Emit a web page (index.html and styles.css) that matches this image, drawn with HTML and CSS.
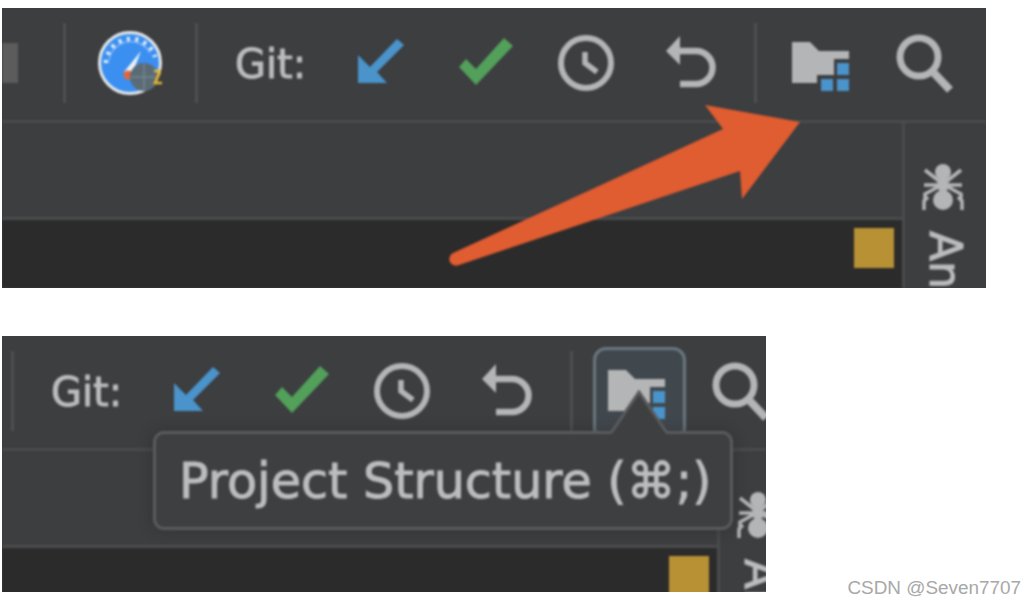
FILE: index.html
```html
<!DOCTYPE html>
<html lang="en">
<head>
<meta charset="utf-8">
<title>Project Structure toolbar</title>
<link rel="stylesheet" href="styles.css">
</head>
<body>
<svg class="defs" aria-hidden="true">
  <symbol id="i-pull" viewBox="0 0 46 64"><polygon points="0,52 0,24 12,36 39,8 46,14 19,41 29,52"/></symbol>
  <symbol id="i-check" viewBox="0 0 54 64"><polygon points="0,36 7,28 17,38 45,7 54,15 17,54"/></symbol>
  <symbol id="i-clock" viewBox="0 0 56 64"><circle cx="28" cy="32" r="25" fill="none" stroke="currentColor" stroke-width="6"/><path d="M27 21 V32 L39 41" fill="none" stroke="currentColor" stroke-width="5.5"/></symbol>
  <symbol id="i-undo" viewBox="0 0 52 64"><polygon points="0,20 14,5 14,34" fill="currentColor"/><path d="M12 20 H30 A16.5 16.5 0 0 1 30 53 H14" fill="none" stroke="currentColor" stroke-width="6.5"/></symbol>
  <symbol id="i-folder" viewBox="0 0 58 64"><polygon points="0,11 18,11 27,20 57,20 57,28 42,28 42,44 25,44 25,52 0,52" fill="currentColor"/><g fill="#4a94cb"><rect x="45" y="32" width="12" height="12"/><rect x="29" y="48" width="12" height="12"/><rect x="45" y="48" width="12" height="12"/></g></symbol>
  <symbol id="i-search" viewBox="0 0 58 64"><circle cx="23" cy="26" r="19" fill="none" stroke="currentColor" stroke-width="7"/><path d="M38 42 L54 59" fill="none" stroke="currentColor" stroke-width="8"/></symbol>
  <symbol id="i-ant" viewBox="0 0 42 48"><g fill="currentColor"><circle cx="21" cy="9" r="8"/><ellipse cx="21" cy="22" rx="6" ry="7"/><ellipse cx="21" cy="37" rx="10" ry="10"/></g><path d="M2 22 H40 M3 7 L17 18 M39 7 L25 18 M3 36 V31 L16 24 M39 36 V31 L26 24 M2 47 V38 L6 34 M40 47 V38 L36 34" fill="none" stroke="currentColor" stroke-width="3.5"/></symbol>
  <symbol id="i-gauge" viewBox="0 0 68 68">
    <circle cx="32" cy="34" r="30.5" fill="#3b8ff0" stroke="#e6e9eb" stroke-width="3"/>
    <path d="M11 31 A22 22 0 0 1 52 24" fill="none" stroke="#7fb6f5" stroke-width="1.5"/>
    <path d="M8 34 A25 25 0 0 1 57 28" fill="none" stroke="#e6f0fb" stroke-width="4.5" stroke-dasharray="3 5.5"/>
    <polygon points="26,43 33,48 43,22" fill="#eef2f5"/>
    <circle cx="30" cy="46" r="4.5" fill="#e0663a"/>
    <circle cx="46" cy="48" r="14" fill="#5b6b76"/>
    <path d="M46 35 V61 M33 48 H59" stroke="#76858f" stroke-width="1.5"/>
    <path d="M56 42 H63 M62 43 L57 54 H64" fill="none" stroke="#e9b92f" stroke-width="2.5"/>
  </symbol>
</svg>

<section class="panel panel-wide">
  <div class="screen">
    <div class="toolbar">
      <span class="stub"></span>
      <span class="sep sep-first"></span>
      <svg class="gauge"><use href="#i-gauge"/></svg>
      <span class="sep sep-second"></span>
      <span class="git">Git:</span>
      <svg class="icon pull"><use href="#i-pull"/></svg>
      <svg class="icon check"><use href="#i-check"/></svg>
      <svg class="icon clock"><use href="#i-clock"/></svg>
      <svg class="icon undo"><use href="#i-undo"/></svg>
      <span class="sep sep-third"></span>
      <span class="folder-slot"><svg class="icon folder"><use href="#i-folder"/></svg></span>
      <svg class="icon search"><use href="#i-search"/></svg>
    </div>
    <div class="main">
      <div class="work">
        <div class="upper"></div>
        <div class="editor"><span class="marker"></span></div>
      </div>
      <aside class="rail">
        <svg class="ant"><use href="#i-ant"/></svg>
        <span class="rail-label">Ant</span>
      </aside>
    </div>
    <svg class="callout" viewBox="0 0 984 280" aria-hidden="true">
      <path d="M703 97 L798 114 L740 191 L738 163 L457 257 A6.5 6.5 0 0 1 451 245 L721 121 Z"/>
    </svg>
  </div>
</section>

<section class="panel panel-narrow">
  <div class="screen">
    <div class="toolbar">
      <span class="sep sep-second"></span>
      <span class="git">Git:</span>
      <svg class="icon pull"><use href="#i-pull"/></svg>
      <svg class="icon check"><use href="#i-check"/></svg>
      <svg class="icon clock"><use href="#i-clock"/></svg>
      <svg class="icon undo"><use href="#i-undo"/></svg>
      <span class="sep sep-third"></span>
      <span class="folder-slot is-active"><svg class="icon folder"><use href="#i-folder"/></svg></span>
      <svg class="icon search"><use href="#i-search"/></svg>
    </div>
    <div class="main">
      <div class="work">
        <div class="upper"></div>
        <div class="editor"><span class="marker"></span></div>
      </div>
      <aside class="rail">
        <svg class="ant"><use href="#i-ant"/></svg>
        <span class="rail-label">Ant</span>
      </aside>
    </div>
    <div class="tooltip">
      <svg class="beak" viewBox="0 0 62 44" aria-hidden="true"><polygon points="3,44 31,2 59,44"/><polyline points="3,43 31,2 59,43"/></svg>
      Project Structure (⌘;)
    </div>
  </div>
</section>

<p class="watermark">CSDN @Seven7707</p>
</body>
</html>
```
FILE: styles.css
```css
* { box-sizing: border-box; }
html, body { margin: 0; height: 100%; background: #fff; }
body {
  position: relative;
  padding: 8px 0 0 2px;
  overflow: hidden;
  font-family: "DejaVu Sans", sans-serif;
}
.defs { display: none; }

.panel { position: relative; overflow: hidden; background: #3d3e40; }
.panel-wide { width: 984px; height: 280px; }
.panel-narrow { width: 764px; height: 256px; margin-top: 48px; }
.screen { position: relative; height: 100%; filter: blur(0.9px); color: #bbbcbe; -webkit-text-stroke: 1px #bbbcbe; }

.toolbar {
  display: flex;
  align-items: center;
  height: 115px;
  padding-bottom: 3px;
  border-bottom: 3px solid #4a4b4d;
}
.panel-narrow .toolbar { padding-left: 9px; }
.panel-narrow .sep-second { margin-left: 0; }

.stub { width: 16px; height: 40px; background: #5c5c5c; flex: none; }
.sep { width: 3px; height: 80px; background: #4e4f51; flex: none; }
.sep-first { margin-left: 45px; }
.gauge { width: 68px; height: 68px; margin-left: 32px; flex: none; }
.sep-second { margin-left: 29px; }
.git { margin: 2px 0 0 37px; width: 73px; flex: none; font-size: 40px; line-height: 1; white-space: nowrap; }
.icon { height: 64px; flex: none; color: #b4b5b7; }
.pull { width: 46px; margin-left: 50px; fill: #4a94cb; }
.check { width: 54px; margin-left: 55px; fill: #52a05a; }
.clock { width: 56px; margin-left: 45px; }
.undo { width: 52px; margin-left: 52px; }
.sep-third { margin-left: 36px; }
.folder-slot { position: relative; display: flex; width: 58px; margin-left: 35px; flex: none; }
.folder { width: 58px; position: relative; }
.search { width: 58px; margin-left: 46px; }
.is-active::before {
  content: "";
  position: absolute;
  top: -12px;
  left: -15px;
  width: 87px;
  height: 88px;
  border: 3px solid #6a7780;
  border-radius: 13px;
  background: #41484d;
}

.main { display: flex; height: 165px; }
.work { width: 900px; flex: none; display: flex; flex-direction: column; }
.panel-narrow .work { width: 715px; }
.upper { height: 97px; border-bottom: 3px solid #4a4b4d; flex: none; }
.editor { flex: 1; background: #2b2b2b; display: flex; justify-content: flex-end; padding: 8px 8px 0 0; }
.marker { width: 40px; height: 40px; background: #b89135; }

.rail { flex: 1; min-width: 0; border-left: 3px solid #4a4b4d; padding: 40px 0 0 17px; display: flex; flex-direction: column; gap: 20px; }
.ant { width: 42px; height: 48px; color: #b4b5b7; flex: none; }
.rail-label {
  writing-mode: vertical-rl;
  font-size: 44px;
  line-height: 42px;
  width: 42px;
  margin-left: 2px;
  white-space: nowrap;
}

.callout { position: absolute; left: 0; top: 0; width: 984px; height: 280px; fill: #e05c31; }

.tooltip {
  position: absolute;
  left: 151px;
  top: 95px;
  width: 580px;
  height: 99px;
  padding-left: 23px;
  display: flex;
  align-items: center;
  white-space: nowrap;
  font-size: 49.2px;
  background: #3e3f41;
  border: 3px solid #5a5b5d;
  border-radius: 11px;
  box-shadow: 0 0 14px rgba(30, 30, 30, .35);
}
.beak { position: absolute; left: 452px; top: -44px; width: 62px; height: 44px; }
.beak polygon { fill: #3e3f41; }
.beak polyline { fill: none; stroke: #5a5b5d; stroke-width: 3; }

.watermark {
  position: absolute;
  right: 15px;
  bottom: 5px;
  margin: 0;
  font-family: "Liberation Sans", sans-serif;
  font-size: 18.9px;
  line-height: 22px;
  color: #a8a8a8;
}
```
